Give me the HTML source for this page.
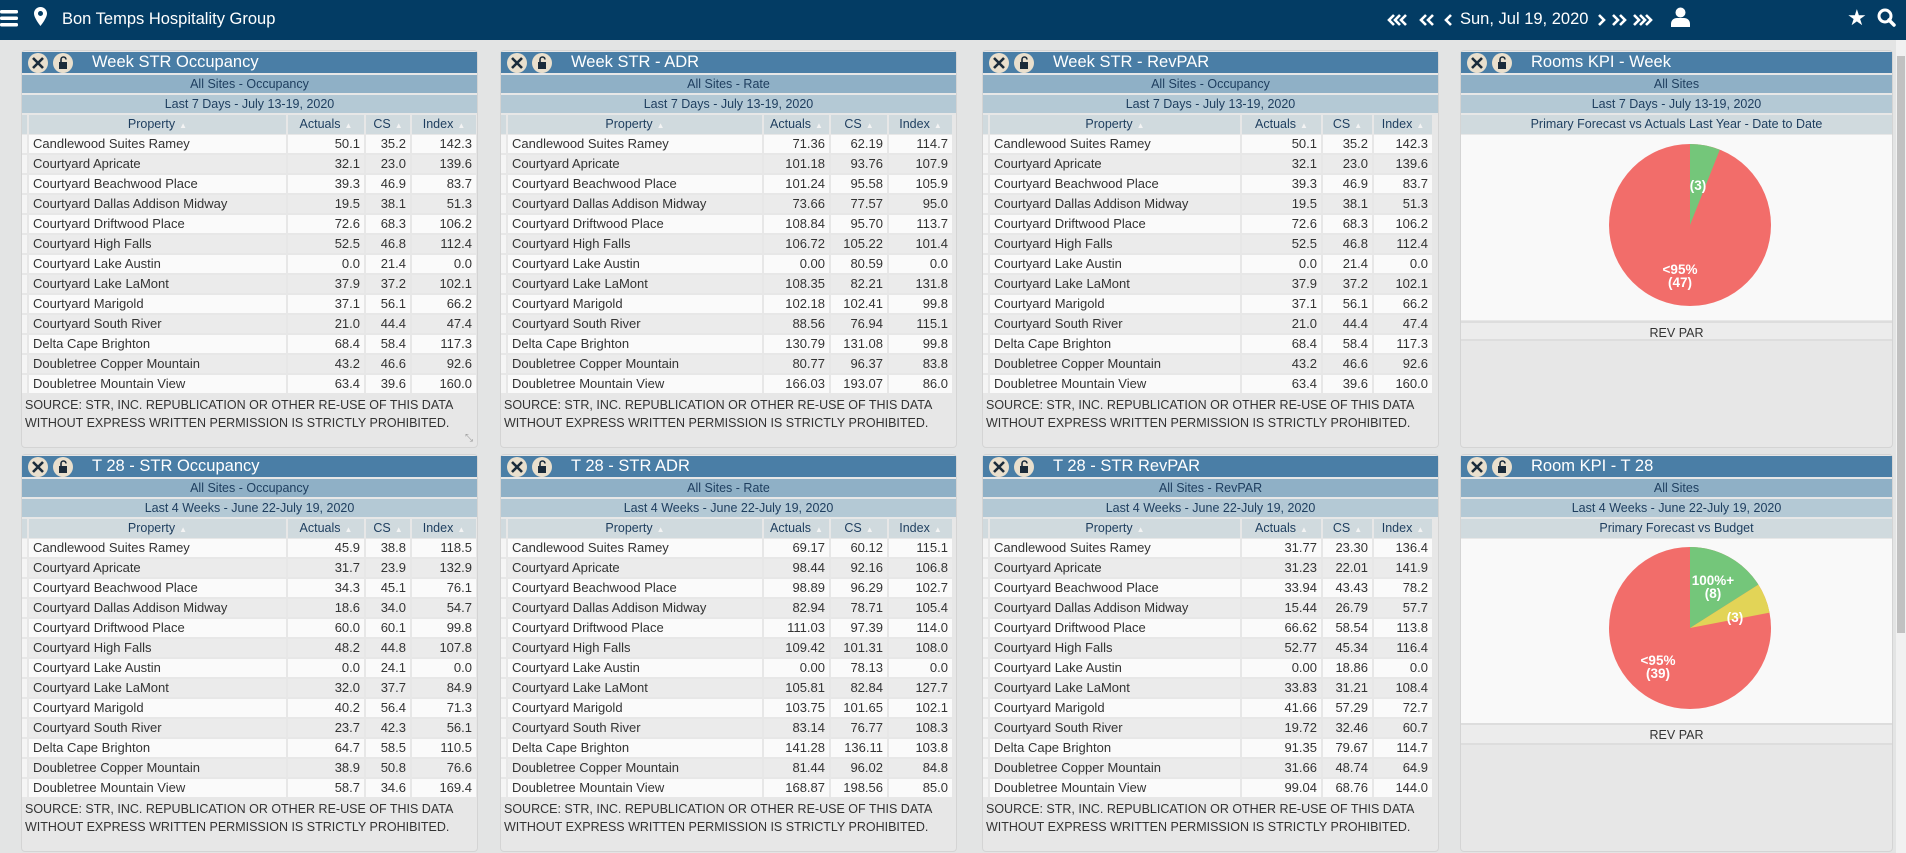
<!DOCTYPE html>
<html><head><meta charset="utf-8"><style>
*{margin:0;padding:0;box-sizing:border-box}
body{width:1906px;height:853px;overflow:hidden;background:#e3e4e4;font-family:"Liberation Sans",Arial,sans-serif;color:#333;position:relative}
#top{position:absolute;left:0;top:0;width:1906px;height:40px;background:#033c64;color:#fff}
.pan{position:absolute;background:#e7e7e7;border:1px solid #d4d4d4;border-radius:4px}
.tt{position:absolute;left:0;top:1px;right:0;height:21px;background:#4a7ea6;color:#fff;font-size:16.5px;line-height:21px;padding-left:70px}
.ic{position:absolute;top:1px;width:20px;height:20px;border-radius:50%;background:#e9dfcd}
.s1,.s2,.s3{position:absolute;left:0;right:0;height:18px;line-height:18px;text-align:center;font-size:12.5px;color:#1d3d5e}
.s1{top:24px;background:#8fb0c6}
.s2{top:44px;background:#b4c9d5}
.s3{top:64px;background:#d0dade;height:19px}
.rows{position:absolute;left:0;top:84px;font-size:13px}
.r{display:flex;height:20px}
.r>span{height:18px;line-height:18px;margin-right:2px;padding:0 4px;text-align:right;white-space:nowrap;overflow:hidden;background:#fafafa}
.r:nth-child(even)>span{background:#ebebeb}
.r>span:first-child{width:5px;padding:0;background:#f5f5f5}
.r>span:nth-child(2){text-align:left}
.h{position:absolute;left:0;top:64px;display:flex;height:19px;font-size:12.5px;color:#1d3d5e}
.h>span{height:19px;line-height:19px;margin-right:2px;text-align:center;background:#d0dade}
.h>span:first-child{width:5px}
.h i{font-style:normal;color:#f4f4f4;font-size:8px;margin-left:4px}
.w1 .a{width:257px}.w1 .b{width:76px}.w1 .c{width:44px}.w1 .d{width:64px}
.w2 .a{width:254px}.w2 .b{width:65px}.w2 .c{width:56px}.w2 .d{width:63px}
.w3 .a{width:250px}.w3 .b{width:79px}.w3 .c{width:49px}.w3 .d{width:58px}
.src{position:absolute;left:3px;top:345px;font-size:12.5px;line-height:18px;color:#333}
.pl{fill:#fff;font-size:13.5px;font-weight:bold;font-family:"Liberation Sans",sans-serif}
</style></head><body>
<div id="top">
<svg style="position:absolute;left:0;top:9px" width="19" height="18"><rect x="0" y="1" width="18" height="3.5" rx="1.5" fill="#fff"/><rect x="0" y="7.5" width="18" height="3.5" rx="1.5" fill="#fff"/><rect x="0" y="14" width="18" height="3.5" rx="1.5" fill="#fff"/></svg>
<svg style="position:absolute;left:34px;top:7px" width="13" height="20" viewBox="0 0 13 20"><path d="M6.5 0C2.9 0 0 2.9 0 6.5 0 11 6.5 19 6.5 19S13 11 13 6.5C13 2.9 10.1 0 6.5 0zm0 9a2.5 2.5 0 1 1 0-5 2.5 2.5 0 0 1 0 5z" fill="#fff"/></svg>
<div style="position:absolute;left:62px;top:10px;font-size:16.5px">Bon Temps Hospitality Group</div>
<svg style="position:absolute;left:1380px;top:13px" width="290" height="14" fill="none" stroke="#fff" stroke-width="2.6" stroke-linejoin="miter">
<path d="M14 2L9 7L14 12M20 2L15 7L20 12M26 2L21 7L26 12"/>
<path d="M46 2L41 7L46 12M53 2L48 7L53 12"/>
<path d="M71 2L66 7L71 12"/>
<path d="M219 2L224 7L219 12"/>
<path d="M233 2L238 7L233 12M240 2L245 7L240 12"/>
<path d="M254 2L259 7L254 12M260 2L265 7L260 12M266 2L271 7L266 12"/>
</svg>
<div style="position:absolute;left:1460px;top:10px;font-size:16.5px">Sun, Jul 19, 2020</div>
<svg style="position:absolute;left:1671px;top:7px" width="19" height="20"><circle cx="9.5" cy="5.5" r="5" fill="#fff"/><path d="M0 20v-3c0-4 3-6 6-6h7c3 0 6 2 6 6v3z" fill="#fff"/></svg>
<div style="position:absolute;left:1847px;top:5px;font-size:22px">★</div>
<svg style="position:absolute;left:1877px;top:8px" width="19" height="19"><circle cx="8" cy="8" r="6" stroke="#fff" stroke-width="3" fill="none"/><path d="M12 12l5 5" stroke="#fff" stroke-width="3.5" stroke-linecap="round"/></svg>
</div>
<div style="position:absolute;left:1896px;top:40px;width:10px;height:813px;background:#f1f1f1"></div>
<div style="position:absolute;left:1897px;top:56px;width:8px;height:577px;background:#c1c1c1"></div>

<!-- TOP ROW -->
<div class="pan w1" style="left:21px;top:50px;width:457px;height:398px">
<div class="tt">Week STR Occupancy</div>
<div class="ic" style="left:6px;top:2px"><svg width="20" height="20"><path d="M5 5l10 10M15 5l-10 10" stroke="#1b2b3a" stroke-width="2.6"/></svg></div>
<div class="ic" style="left:31px;top:2px"><svg width="20" height="20"><rect x="6" y="9" width="8" height="7" fill="#1b2b3a"/><path d="M8 9V6.5a2.5 2.5 0 0 1 5 0" stroke="#1b2b3a" stroke-width="1.6" fill="none"/></svg></div>
<div class="s1">All Sites - Occupancy</div><div class="s2">Last 7 Days - July 13-19, 2020</div>
<div class="h"><span></span><span class="a">Property<i>▲</i></span><span class="b">Actuals<i>▲</i></span><span class="c">CS<i>▲</i></span><span class="d">Index<i>▲</i></span></div>
<div class="rows">
<div class="r"><span></span><span class="a">Candlewood Suites Ramey</span><span class="b">50.1</span><span class="c">35.2</span><span class="d">142.3</span></div>
<div class="r"><span></span><span class="a">Courtyard Apricate</span><span class="b">32.1</span><span class="c">23.0</span><span class="d">139.6</span></div>
<div class="r"><span></span><span class="a">Courtyard Beachwood Place</span><span class="b">39.3</span><span class="c">46.9</span><span class="d">83.7</span></div>
<div class="r"><span></span><span class="a">Courtyard Dallas Addison Midway</span><span class="b">19.5</span><span class="c">38.1</span><span class="d">51.3</span></div>
<div class="r"><span></span><span class="a">Courtyard Driftwood Place</span><span class="b">72.6</span><span class="c">68.3</span><span class="d">106.2</span></div>
<div class="r"><span></span><span class="a">Courtyard High Falls</span><span class="b">52.5</span><span class="c">46.8</span><span class="d">112.4</span></div>
<div class="r"><span></span><span class="a">Courtyard Lake Austin</span><span class="b">0.0</span><span class="c">21.4</span><span class="d">0.0</span></div>
<div class="r"><span></span><span class="a">Courtyard Lake LaMont</span><span class="b">37.9</span><span class="c">37.2</span><span class="d">102.1</span></div>
<div class="r"><span></span><span class="a">Courtyard Marigold</span><span class="b">37.1</span><span class="c">56.1</span><span class="d">66.2</span></div>
<div class="r"><span></span><span class="a">Courtyard South River</span><span class="b">21.0</span><span class="c">44.4</span><span class="d">47.4</span></div>
<div class="r"><span></span><span class="a">Delta Cape Brighton</span><span class="b">68.4</span><span class="c">58.4</span><span class="d">117.3</span></div>
<div class="r"><span></span><span class="a">Doubletree Copper Mountain</span><span class="b">43.2</span><span class="c">46.6</span><span class="d">92.6</span></div>
<div class="r"><span></span><span class="a">Doubletree Mountain View</span><span class="b">63.4</span><span class="c">39.6</span><span class="d">160.0</span></div>
</div>
<div class="src">SOURCE: STR, INC. REPUBLICATION OR OTHER RE-USE OF THIS DATA<br>WITHOUT EXPRESS WRITTEN PERMISSION IS STRICTLY PROHIBITED.</div>
<div style="position:absolute;right:4px;bottom:3px;font-size:10px;color:#999">⤡</div>
</div>

<div class="pan w2" style="left:500px;top:50px;width:457px;height:398px">
<div class="tt">Week STR - ADR</div>
<div class="ic" style="left:6px;top:2px"><svg width="20" height="20"><path d="M5 5l10 10M15 5l-10 10" stroke="#1b2b3a" stroke-width="2.6"/></svg></div>
<div class="ic" style="left:31px;top:2px"><svg width="20" height="20"><rect x="6" y="9" width="8" height="7" fill="#1b2b3a"/><path d="M8 9V6.5a2.5 2.5 0 0 1 5 0" stroke="#1b2b3a" stroke-width="1.6" fill="none"/></svg></div>
<div class="s1">All Sites - Rate</div><div class="s2">Last 7 Days - July 13-19, 2020</div>
<div class="h"><span></span><span class="a">Property<i>▲</i></span><span class="b">Actuals<i>▲</i></span><span class="c">CS<i>▲</i></span><span class="d">Index<i>▲</i></span></div>
<div class="rows">
<div class="r"><span></span><span class="a">Candlewood Suites Ramey</span><span class="b">71.36</span><span class="c">62.19</span><span class="d">114.7</span></div>
<div class="r"><span></span><span class="a">Courtyard Apricate</span><span class="b">101.18</span><span class="c">93.76</span><span class="d">107.9</span></div>
<div class="r"><span></span><span class="a">Courtyard Beachwood Place</span><span class="b">101.24</span><span class="c">95.58</span><span class="d">105.9</span></div>
<div class="r"><span></span><span class="a">Courtyard Dallas Addison Midway</span><span class="b">73.66</span><span class="c">77.57</span><span class="d">95.0</span></div>
<div class="r"><span></span><span class="a">Courtyard Driftwood Place</span><span class="b">108.84</span><span class="c">95.70</span><span class="d">113.7</span></div>
<div class="r"><span></span><span class="a">Courtyard High Falls</span><span class="b">106.72</span><span class="c">105.22</span><span class="d">101.4</span></div>
<div class="r"><span></span><span class="a">Courtyard Lake Austin</span><span class="b">0.00</span><span class="c">80.59</span><span class="d">0.0</span></div>
<div class="r"><span></span><span class="a">Courtyard Lake LaMont</span><span class="b">108.35</span><span class="c">82.21</span><span class="d">131.8</span></div>
<div class="r"><span></span><span class="a">Courtyard Marigold</span><span class="b">102.18</span><span class="c">102.41</span><span class="d">99.8</span></div>
<div class="r"><span></span><span class="a">Courtyard South River</span><span class="b">88.56</span><span class="c">76.94</span><span class="d">115.1</span></div>
<div class="r"><span></span><span class="a">Delta Cape Brighton</span><span class="b">130.79</span><span class="c">131.08</span><span class="d">99.8</span></div>
<div class="r"><span></span><span class="a">Doubletree Copper Mountain</span><span class="b">80.77</span><span class="c">96.37</span><span class="d">83.8</span></div>
<div class="r"><span></span><span class="a">Doubletree Mountain View</span><span class="b">166.03</span><span class="c">193.07</span><span class="d">86.0</span></div>
</div>
<div class="src">SOURCE: STR, INC. REPUBLICATION OR OTHER RE-USE OF THIS DATA<br>WITHOUT EXPRESS WRITTEN PERMISSION IS STRICTLY PROHIBITED.</div>
</div>

<div class="pan w3" style="left:982px;top:50px;width:457px;height:398px">
<div class="tt">Week STR - RevPAR</div>
<div class="ic" style="left:6px;top:2px"><svg width="20" height="20"><path d="M5 5l10 10M15 5l-10 10" stroke="#1b2b3a" stroke-width="2.6"/></svg></div>
<div class="ic" style="left:31px;top:2px"><svg width="20" height="20"><rect x="6" y="9" width="8" height="7" fill="#1b2b3a"/><path d="M8 9V6.5a2.5 2.5 0 0 1 5 0" stroke="#1b2b3a" stroke-width="1.6" fill="none"/></svg></div>
<div class="s1">All Sites - Occupancy</div><div class="s2">Last 7 Days - July 13-19, 2020</div>
<div class="h"><span></span><span class="a">Property<i>▲</i></span><span class="b">Actuals<i>▲</i></span><span class="c">CS<i>▲</i></span><span class="d">Index<i>▲</i></span></div>
<div class="rows">
<div class="r"><span></span><span class="a">Candlewood Suites Ramey</span><span class="b">50.1</span><span class="c">35.2</span><span class="d">142.3</span></div>
<div class="r"><span></span><span class="a">Courtyard Apricate</span><span class="b">32.1</span><span class="c">23.0</span><span class="d">139.6</span></div>
<div class="r"><span></span><span class="a">Courtyard Beachwood Place</span><span class="b">39.3</span><span class="c">46.9</span><span class="d">83.7</span></div>
<div class="r"><span></span><span class="a">Courtyard Dallas Addison Midway</span><span class="b">19.5</span><span class="c">38.1</span><span class="d">51.3</span></div>
<div class="r"><span></span><span class="a">Courtyard Driftwood Place</span><span class="b">72.6</span><span class="c">68.3</span><span class="d">106.2</span></div>
<div class="r"><span></span><span class="a">Courtyard High Falls</span><span class="b">52.5</span><span class="c">46.8</span><span class="d">112.4</span></div>
<div class="r"><span></span><span class="a">Courtyard Lake Austin</span><span class="b">0.0</span><span class="c">21.4</span><span class="d">0.0</span></div>
<div class="r"><span></span><span class="a">Courtyard Lake LaMont</span><span class="b">37.9</span><span class="c">37.2</span><span class="d">102.1</span></div>
<div class="r"><span></span><span class="a">Courtyard Marigold</span><span class="b">37.1</span><span class="c">56.1</span><span class="d">66.2</span></div>
<div class="r"><span></span><span class="a">Courtyard South River</span><span class="b">21.0</span><span class="c">44.4</span><span class="d">47.4</span></div>
<div class="r"><span></span><span class="a">Delta Cape Brighton</span><span class="b">68.4</span><span class="c">58.4</span><span class="d">117.3</span></div>
<div class="r"><span></span><span class="a">Doubletree Copper Mountain</span><span class="b">43.2</span><span class="c">46.6</span><span class="d">92.6</span></div>
<div class="r"><span></span><span class="a">Doubletree Mountain View</span><span class="b">63.4</span><span class="c">39.6</span><span class="d">160.0</span></div>
</div>
<div class="src">SOURCE: STR, INC. REPUBLICATION OR OTHER RE-USE OF THIS DATA<br>WITHOUT EXPRESS WRITTEN PERMISSION IS STRICTLY PROHIBITED.</div>
</div>

<div class="pan" style="left:1460px;top:50px;width:433px;height:398px">
<div class="tt">Rooms KPI - Week</div>
<div class="ic" style="left:6px;top:2px"><svg width="20" height="20"><path d="M5 5l10 10M15 5l-10 10" stroke="#1b2b3a" stroke-width="2.6"/></svg></div>
<div class="ic" style="left:31px;top:2px"><svg width="20" height="20"><rect x="6" y="9" width="8" height="7" fill="#1b2b3a"/><path d="M8 9V6.5a2.5 2.5 0 0 1 5 0" stroke="#1b2b3a" stroke-width="1.6" fill="none"/></svg></div>
<div class="s1">All Sites</div><div class="s2">Last 7 Days - July 13-19, 2020</div><div class="s3">Primary Forecast vs Actuals Last Year - Date to Date</div>
<div style="position:absolute;left:0;right:0;top:84px;height:185px;background:#f9f9f9">
<svg width="431" height="185" style="position:absolute;left:0;top:0">
<circle cx="229" cy="90" r="81" fill="#f26d6a"/>
<path d="M229 90L229 9A81 81 0 0 1 258.8 14.7Z" fill="#74c67a"/>
<text class="pl" x="237" y="55" text-anchor="middle">(3)</text>
<text class="pl" x="219" y="139" text-anchor="middle">&lt;95%</text>
<text class="pl" x="219" y="152" text-anchor="middle">(47)</text>
</svg></div>
<div style="position:absolute;left:0;right:0;top:270px;height:20px;line-height:20px;text-align:center;font-size:12.5px;background:#ececec;border-top:2px solid #ddd;border-bottom:2px solid #ddd">REV PAR</div>
</div>

<!-- BOTTOM ROW -->
<div class="pan w1" style="left:21px;top:454px;width:457px;height:398px">
<div class="tt">T 28 - STR Occupancy</div>
<div class="ic" style="left:6px;top:2px"><svg width="20" height="20"><path d="M5 5l10 10M15 5l-10 10" stroke="#1b2b3a" stroke-width="2.6"/></svg></div>
<div class="ic" style="left:31px;top:2px"><svg width="20" height="20"><rect x="6" y="9" width="8" height="7" fill="#1b2b3a"/><path d="M8 9V6.5a2.5 2.5 0 0 1 5 0" stroke="#1b2b3a" stroke-width="1.6" fill="none"/></svg></div>
<div class="s1">All Sites - Occupancy</div><div class="s2">Last 4 Weeks - June 22-July 19, 2020</div>
<div class="h"><span></span><span class="a">Property<i>▲</i></span><span class="b">Actuals<i>▲</i></span><span class="c">CS<i>▲</i></span><span class="d">Index<i>▲</i></span></div>
<div class="rows">
<div class="r"><span></span><span class="a">Candlewood Suites Ramey</span><span class="b">45.9</span><span class="c">38.8</span><span class="d">118.5</span></div>
<div class="r"><span></span><span class="a">Courtyard Apricate</span><span class="b">31.7</span><span class="c">23.9</span><span class="d">132.9</span></div>
<div class="r"><span></span><span class="a">Courtyard Beachwood Place</span><span class="b">34.3</span><span class="c">45.1</span><span class="d">76.1</span></div>
<div class="r"><span></span><span class="a">Courtyard Dallas Addison Midway</span><span class="b">18.6</span><span class="c">34.0</span><span class="d">54.7</span></div>
<div class="r"><span></span><span class="a">Courtyard Driftwood Place</span><span class="b">60.0</span><span class="c">60.1</span><span class="d">99.8</span></div>
<div class="r"><span></span><span class="a">Courtyard High Falls</span><span class="b">48.2</span><span class="c">44.8</span><span class="d">107.8</span></div>
<div class="r"><span></span><span class="a">Courtyard Lake Austin</span><span class="b">0.0</span><span class="c">24.1</span><span class="d">0.0</span></div>
<div class="r"><span></span><span class="a">Courtyard Lake LaMont</span><span class="b">32.0</span><span class="c">37.7</span><span class="d">84.9</span></div>
<div class="r"><span></span><span class="a">Courtyard Marigold</span><span class="b">40.2</span><span class="c">56.4</span><span class="d">71.3</span></div>
<div class="r"><span></span><span class="a">Courtyard South River</span><span class="b">23.7</span><span class="c">42.3</span><span class="d">56.1</span></div>
<div class="r"><span></span><span class="a">Delta Cape Brighton</span><span class="b">64.7</span><span class="c">58.5</span><span class="d">110.5</span></div>
<div class="r"><span></span><span class="a">Doubletree Copper Mountain</span><span class="b">38.9</span><span class="c">50.8</span><span class="d">76.6</span></div>
<div class="r"><span></span><span class="a">Doubletree Mountain View</span><span class="b">58.7</span><span class="c">34.6</span><span class="d">169.4</span></div>
</div>
<div class="src">SOURCE: STR, INC. REPUBLICATION OR OTHER RE-USE OF THIS DATA<br>WITHOUT EXPRESS WRITTEN PERMISSION IS STRICTLY PROHIBITED.</div>
</div>

<div class="pan w2" style="left:500px;top:454px;width:457px;height:398px">
<div class="tt">T 28 - STR ADR</div>
<div class="ic" style="left:6px;top:2px"><svg width="20" height="20"><path d="M5 5l10 10M15 5l-10 10" stroke="#1b2b3a" stroke-width="2.6"/></svg></div>
<div class="ic" style="left:31px;top:2px"><svg width="20" height="20"><rect x="6" y="9" width="8" height="7" fill="#1b2b3a"/><path d="M8 9V6.5a2.5 2.5 0 0 1 5 0" stroke="#1b2b3a" stroke-width="1.6" fill="none"/></svg></div>
<div class="s1">All Sites - Rate</div><div class="s2">Last 4 Weeks - June 22-July 19, 2020</div>
<div class="h"><span></span><span class="a">Property<i>▲</i></span><span class="b">Actuals<i>▲</i></span><span class="c">CS<i>▲</i></span><span class="d">Index<i>▲</i></span></div>
<div class="rows">
<div class="r"><span></span><span class="a">Candlewood Suites Ramey</span><span class="b">69.17</span><span class="c">60.12</span><span class="d">115.1</span></div>
<div class="r"><span></span><span class="a">Courtyard Apricate</span><span class="b">98.44</span><span class="c">92.16</span><span class="d">106.8</span></div>
<div class="r"><span></span><span class="a">Courtyard Beachwood Place</span><span class="b">98.89</span><span class="c">96.29</span><span class="d">102.7</span></div>
<div class="r"><span></span><span class="a">Courtyard Dallas Addison Midway</span><span class="b">82.94</span><span class="c">78.71</span><span class="d">105.4</span></div>
<div class="r"><span></span><span class="a">Courtyard Driftwood Place</span><span class="b">111.03</span><span class="c">97.39</span><span class="d">114.0</span></div>
<div class="r"><span></span><span class="a">Courtyard High Falls</span><span class="b">109.42</span><span class="c">101.31</span><span class="d">108.0</span></div>
<div class="r"><span></span><span class="a">Courtyard Lake Austin</span><span class="b">0.00</span><span class="c">78.13</span><span class="d">0.0</span></div>
<div class="r"><span></span><span class="a">Courtyard Lake LaMont</span><span class="b">105.81</span><span class="c">82.84</span><span class="d">127.7</span></div>
<div class="r"><span></span><span class="a">Courtyard Marigold</span><span class="b">103.75</span><span class="c">101.65</span><span class="d">102.1</span></div>
<div class="r"><span></span><span class="a">Courtyard South River</span><span class="b">83.14</span><span class="c">76.77</span><span class="d">108.3</span></div>
<div class="r"><span></span><span class="a">Delta Cape Brighton</span><span class="b">141.28</span><span class="c">136.11</span><span class="d">103.8</span></div>
<div class="r"><span></span><span class="a">Doubletree Copper Mountain</span><span class="b">81.44</span><span class="c">96.02</span><span class="d">84.8</span></div>
<div class="r"><span></span><span class="a">Doubletree Mountain View</span><span class="b">168.87</span><span class="c">198.56</span><span class="d">85.0</span></div>
</div>
<div class="src">SOURCE: STR, INC. REPUBLICATION OR OTHER RE-USE OF THIS DATA<br>WITHOUT EXPRESS WRITTEN PERMISSION IS STRICTLY PROHIBITED.</div>
</div>

<div class="pan w3" style="left:982px;top:454px;width:457px;height:398px">
<div class="tt">T 28 - STR RevPAR</div>
<div class="ic" style="left:6px;top:2px"><svg width="20" height="20"><path d="M5 5l10 10M15 5l-10 10" stroke="#1b2b3a" stroke-width="2.6"/></svg></div>
<div class="ic" style="left:31px;top:2px"><svg width="20" height="20"><rect x="6" y="9" width="8" height="7" fill="#1b2b3a"/><path d="M8 9V6.5a2.5 2.5 0 0 1 5 0" stroke="#1b2b3a" stroke-width="1.6" fill="none"/></svg></div>
<div class="s1">All Sites - RevPAR</div><div class="s2">Last 4 Weeks - June 22-July 19, 2020</div>
<div class="h"><span></span><span class="a">Property<i>▲</i></span><span class="b">Actuals<i>▲</i></span><span class="c">CS<i>▲</i></span><span class="d">Index<i>▲</i></span></div>
<div class="rows">
<div class="r"><span></span><span class="a">Candlewood Suites Ramey</span><span class="b">31.77</span><span class="c">23.30</span><span class="d">136.4</span></div>
<div class="r"><span></span><span class="a">Courtyard Apricate</span><span class="b">31.23</span><span class="c">22.01</span><span class="d">141.9</span></div>
<div class="r"><span></span><span class="a">Courtyard Beachwood Place</span><span class="b">33.94</span><span class="c">43.43</span><span class="d">78.2</span></div>
<div class="r"><span></span><span class="a">Courtyard Dallas Addison Midway</span><span class="b">15.44</span><span class="c">26.79</span><span class="d">57.7</span></div>
<div class="r"><span></span><span class="a">Courtyard Driftwood Place</span><span class="b">66.62</span><span class="c">58.54</span><span class="d">113.8</span></div>
<div class="r"><span></span><span class="a">Courtyard High Falls</span><span class="b">52.77</span><span class="c">45.34</span><span class="d">116.4</span></div>
<div class="r"><span></span><span class="a">Courtyard Lake Austin</span><span class="b">0.00</span><span class="c">18.86</span><span class="d">0.0</span></div>
<div class="r"><span></span><span class="a">Courtyard Lake LaMont</span><span class="b">33.83</span><span class="c">31.21</span><span class="d">108.4</span></div>
<div class="r"><span></span><span class="a">Courtyard Marigold</span><span class="b">41.66</span><span class="c">57.29</span><span class="d">72.7</span></div>
<div class="r"><span></span><span class="a">Courtyard South River</span><span class="b">19.72</span><span class="c">32.46</span><span class="d">60.7</span></div>
<div class="r"><span></span><span class="a">Delta Cape Brighton</span><span class="b">91.35</span><span class="c">79.67</span><span class="d">114.7</span></div>
<div class="r"><span></span><span class="a">Doubletree Copper Mountain</span><span class="b">31.66</span><span class="c">48.74</span><span class="d">64.9</span></div>
<div class="r"><span></span><span class="a">Doubletree Mountain View</span><span class="b">99.04</span><span class="c">68.76</span><span class="d">144.0</span></div>
</div>
<div class="src">SOURCE: STR, INC. REPUBLICATION OR OTHER RE-USE OF THIS DATA<br>WITHOUT EXPRESS WRITTEN PERMISSION IS STRICTLY PROHIBITED.</div>
</div>

<div class="pan" style="left:1460px;top:454px;width:433px;height:398px">
<div class="tt">Room KPI - T 28</div>
<div class="ic" style="left:6px;top:2px"><svg width="20" height="20"><path d="M5 5l10 10M15 5l-10 10" stroke="#1b2b3a" stroke-width="2.6"/></svg></div>
<div class="ic" style="left:31px;top:2px"><svg width="20" height="20"><rect x="6" y="9" width="8" height="7" fill="#1b2b3a"/><path d="M8 9V6.5a2.5 2.5 0 0 1 5 0" stroke="#1b2b3a" stroke-width="1.6" fill="none"/></svg></div>
<div class="s1">All Sites</div><div class="s2">Last 4 Weeks - June 22-July 19, 2020</div><div class="s3">Primary Forecast vs Budget</div>
<div style="position:absolute;left:0;right:0;top:84px;height:185px;background:#f9f9f9">
<svg width="431" height="185" style="position:absolute;left:0;top:0">
<circle cx="229" cy="89" r="81" fill="#f26d6a"/>
<path d="M229 89L229 8A81 81 0 0 1 297.4 45.6Z" fill="#74c67a"/>
<path d="M229 89L297.4 45.6A81 81 0 0 1 308.6 73.6Z" fill="#e2d457"/>
<text class="pl" x="252" y="46" text-anchor="middle">100%+</text>
<text class="pl" x="252" y="59" text-anchor="middle">(8)</text>
<text class="pl" x="274" y="83" text-anchor="middle">(3)</text>
<text class="pl" x="197" y="126" text-anchor="middle">&lt;95%</text>
<text class="pl" x="197" y="139" text-anchor="middle">(39)</text>
</svg></div>
<div style="position:absolute;left:0;right:0;top:268px;height:22px;line-height:20px;text-align:center;font-size:12.5px;background:#ececec;border-top:2px solid #ddd;border-bottom:2px solid #ddd">REV PAR</div>
</div>
</body></html>
